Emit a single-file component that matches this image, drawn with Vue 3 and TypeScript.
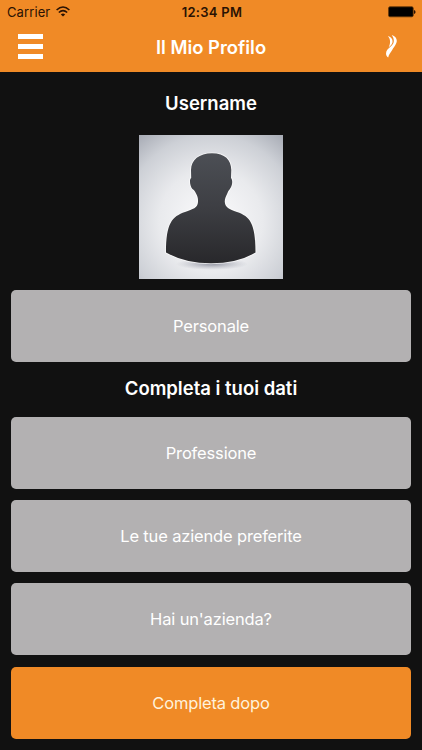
<script setup lang="ts">
interface Action {
  label: string
  kind: 'plain' | 'accent'
}

const actions: Action[] = [
  { label: 'Professione', kind: 'plain' },
  { label: 'Le tue aziende preferite', kind: 'plain' },
  { label: "Hai un'azienda?", kind: 'plain' },
  { label: 'Completa dopo', kind: 'accent' },
]
</script>

<template>
  <div class="screen">
    <header class="header">
      <div class="status">
        <div class="carrier">
          <span>Carrier</span>
          <svg class="wifi" width="14" height="11" viewBox="0 0 14 11" fill="none" stroke="#2a1203">
            <path d="M.6 4Q7-2 13.4 4" stroke-width="1.6" />
            <path d="M2.8 6.5Q7 2.7 11.2 6.5" stroke-width="1.5" />
            <path d="M7 10.6L4.8 8.4Q7 6.4 9.2 8.4Z" fill="#2a1203" stroke="none" />
          </svg>
        </div>
        <span class="time">12:34 PM</span>
        <svg class="battery" width="28" height="12" viewBox="0 0 28 12">
          <rect x=".6" y=".8" width="24.6" height="10" rx="1.4" fill="#000" stroke="#5c3208" stroke-width=".8" />
          <path d="M26 4v4q1.6-.5 1.6-2T26 4Z" fill="#2a1203" />
        </svg>
      </div>
      <div class="navbar">
        <button class="menu" aria-label="Menu"><i></i><i></i><i></i></button>
        <h1>Il Mio Profilo</h1>
        <svg class="logo" width="13" height="24" viewBox="0 0 13 24" fill="#fff">
          <path d="M7.7 0C12 1.5 13.7 4.5 12.3 8C11.2 11 9.4 12.5 8.2 15C6.8 17.5 4.8 19 4.2 22.5C1.6 20.8 1.4 17.5 3.3 14.8C5 12.3 8 11.3 9.2 8.5C10.4 5.8 9.8 2.8 7.7 0Z" />
          <path d="M3.8 1C7.5 2 8.9 4.5 8.5 7.2C8.1 9.5 6.2 11 4.6 12.4C6.6 8.7 6.8 4 3.8 1Z" />
        </svg>
      </div>
    </header>
    <main class="content">
      <h2 class="username">Username</h2>
      <svg class="avatar" viewBox="0 0 144 144">
        <defs>
          <radialGradient id="backdrop" cx=".5" cy=".6" r=".8">
            <stop offset="0" stop-color="#fcfcfd" />
            <stop offset=".45" stop-color="#e9eaed" />
            <stop offset=".75" stop-color="#cdd0d6" />
            <stop offset="1" stop-color="#a3a7b1" />
          </radialGradient>
          <linearGradient id="figure" x1="0" y1="0" x2="0" y2="1">
            <stop offset="0" stop-color="#4c4f55" />
            <stop offset=".5" stop-color="#3d3e43" />
            <stop offset="1" stop-color="#28282b" />
          </linearGradient>
          <radialGradient id="shadow">
            <stop offset="0" stop-color="#737686" stop-opacity=".75" />
            <stop offset="1" stop-color="#9a9dab" stop-opacity="0" />
          </radialGradient>
        </defs>
        <rect width="144" height="144" fill="url(#backdrop)" />
        <ellipse cx="73" cy="129" rx="36" ry="6" fill="url(#shadow)" />
        <path
          d="M73 18.3C60 18.3 52.3 25 52 35L52.2 43C50 44.5 51 51 53.4 54C55 55 56 56 57 58.5C58.6 61.5 59.2 63.5 59 67C58.6 73 54 74 46 77C33 81.5 27 88 27 117.5Q46 128.3 72 128.3Q99 128.3 116.5 117.5C116.5 88 111 81.5 98 77C90 74 86.3 72.5 85.8 67C85.6 63.5 87 61.5 88.5 58C89.3 56 90.2 55 91 53.8C93.5 50.5 94 45 92 43L92.3 35C92 25 86 18.3 73 18.3Z"
          fill="url(#figure)" stroke="#fff" stroke-opacity=".7" stroke-width="1.8" paint-order="stroke" />
      </svg>
      <button class="action plain">Personale</button>
      <h2 class="section">Completa i tuoi dati</h2>
      <div class="actions">
        <button v-for="action in actions" :key="action.label" class="action" :class="action.kind">
          {{ action.label }}
        </button>
      </div>
    </main>
  </div>
</template>

<style>
body {
  margin: 0;
  background: #111;
}
</style>

<style scoped>
.screen {
  height: 750px;
  overflow: hidden;
  background: #111;
  color: #fff;
  font-family: Inter, 'Liberation Sans', sans-serif;
}
.header {
  box-sizing: border-box;
  height: 72px;
  background: #f08a26;
}
.status {
  display: grid;
  grid-template-columns: 1fr auto 1fr;
  align-items: center;
  height: 23px;
  padding: 0 6px 0 7px;
  color: #2a1203;
  font-size: 13px;
}
.carrier {
  display: flex;
  align-items: center;
  gap: 6px;
  letter-spacing: 0.1px;
}
.time {
  padding-left: 1px;
  font-weight: 600;
  letter-spacing: 0.3px;
}
.battery {
  justify-self: end;
}
.navbar {
  display: grid;
  grid-template-columns: 1fr auto 1fr;
  align-items: center;
  height: 48px;
  padding: 0 18px;
}
.menu {
  display: flex;
  flex-direction: column;
  gap: 5px;
  width: 25px;
  margin-bottom: 2px;
  padding: 0;
  border: 0;
  background: none;
}
.menu i {
  width: 25px;
  height: 5px;
  background: #fff;
}
h1,
h2 {
  margin: 0;
  font-size: 18.5px;
  font-weight: 600;
  text-align: center;
}
h1 {
  font-size: 18.4px;
}
.logo {
  justify-self: end;
  margin-right: 7px;
}
.content {
  display: flex;
  flex-direction: column;
  padding: 0 11.4px;
}
.username {
  height: 63px;
  line-height: 62px;
}
.avatar {
  align-self: center;
  width: 144px;
  height: 144px;
}
.action {
  display: block;
  width: 100%;
  height: 72px;
  padding: 0;
  border: 0;
  border-radius: 5px;
  color: #fff;
  font-family: inherit;
  font-size: 16.5px;
  letter-spacing: -0.16px;
}
.plain {
  background: #b3b1b2;
}
.accent {
  background: #f08a26;
  color: #fff2dc;
}
.content > .action {
  margin-top: 11.3px;
}
.section {
  height: 54.3px;
  line-height: 52px;
}
.actions {
  display: flex;
  flex-direction: column;
  gap: 11.35px;
}
</style>
